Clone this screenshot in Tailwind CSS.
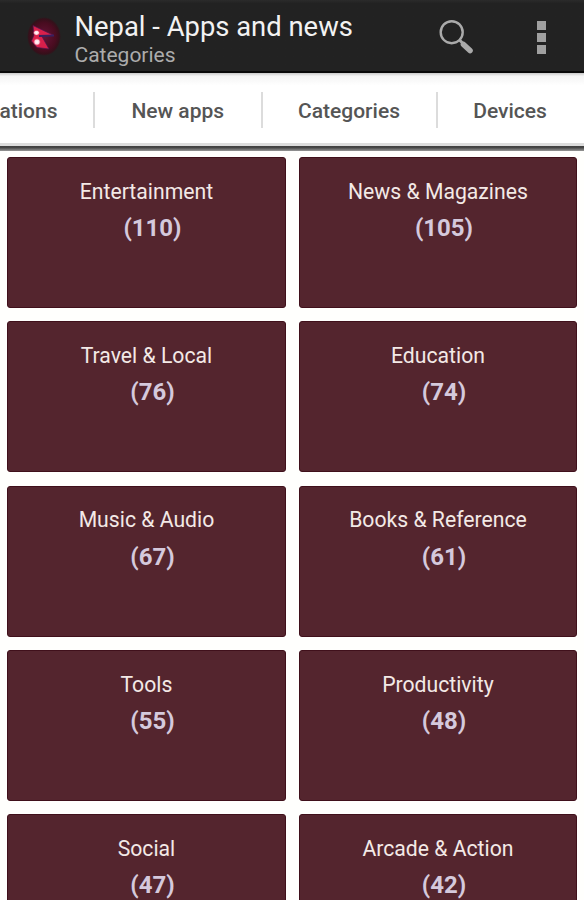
<!DOCTYPE html>
<html lang="en">
<head>
<meta charset="utf-8">
<title>Nepal - Apps and news</title>
<script src="https://cdn.jsdelivr.net/npm/@tailwindcss/browser@4"></script>
</head>
<body class="bg-white font-[Roboto,sans-serif]">
<div class="w-[584px] h-[900px] overflow-hidden flex flex-col bg-[#fffffd]">
  <header class="h-[73px] shrink-0 flex bg-linear-to-b from-[#2b2b2b] from-0% via-[#222222] via-5% to-[#222222] border-b-2 border-[#080808] pl-[26px]">
    <svg class="w-[36px] h-[40px] mt-[17px] shrink-0" viewBox="0 0 36 40">
      <defs>
        <radialGradient id="disc"><stop offset="0" stop-color="#641436"/><stop offset=".7" stop-color="#490c20"/><stop offset=".9" stop-color="#35101a"/><stop offset="1" stop-color="#222222"/></radialGradient>
        <radialGradient id="glow"><stop offset="0" stop-color="#fff"/><stop offset=".55" stop-color="#ffd5e0"/><stop offset="1" stop-color="#e62450" stop-opacity="0"/></radialGradient>
      </defs>
      <ellipse cx="18" cy="19.500" rx="17" ry="19.500" fill="url(#disc)"/>
      <path d="M7 8.500 27 18 16 19.500 23 32 11 30.500 5.500 24 8 18Z" fill="#d9204b" stroke="#4b1650" stroke-width=".7"/>
      <path d="M13 19 28 18.500" stroke="#39205d" stroke-width="1.800"/>
      <ellipse cx="10.500" cy="15.800" rx="3.600" ry="3" fill="url(#glow)"/>
      <circle cx="11" cy="25" r="4" fill="url(#glow)"/>
    </svg>
    <div class="ml-[12.5px] w-[364.5px] pt-[11px]">
      <h1 class="text-[27.4px] leading-[32px] text-[#f2f2f2] whitespace-nowrap">Nepal - Apps and news</h1>
      <p class="text-[21px] leading-[25px] text-[#acacac]">Categories</p>
    </div>
    <svg class="w-[38px] h-[38px] mt-[18px] shrink-0" viewBox="0 0 38 38">
      <circle cx="12.700" cy="14.200" r="11" fill="none" stroke="#aaaaaa" stroke-width="2.400"/>
      <path d="M20 21.500 25 26.500" stroke="#aaaaaa" stroke-width="3"/>
      <path d="M24.500 26.500 31 32.500" stroke="#aaaaaa" stroke-width="5.600" stroke-linecap="round"/>
    </svg>
    <div class="ml-[60px] mt-[21px] flex flex-col gap-[3px]">
      <span class="w-[9px] h-[9px] bg-[#a0a0a0]"></span>
      <span class="w-[9px] h-[9px] bg-[#a0a0a0]"></span>
      <span class="w-[9px] h-[9px] bg-[#a0a0a0]"></span>
    </div>
  </header>
  <nav class="relative h-[78px] shrink-0 flex items-start pt-[19px] bg-linear-to-b from-[#c8c8c8] from-0% via-[#f4f4f4] via-4% to-white to-16% text-[21px] leading-[38px] font-medium text-[#555555] whitespace-nowrap">
    <span class="w-[93px] flex justify-end pr-[35.5px]">Publications</span>
    <span class="w-[167.500px] h-[36px] border-l-2 border-[#dcdcdc] text-center">New apps</span>
    <span class="w-[175px] h-[36px] border-l-2 border-[#dcdcdc] text-center">Categories</span>
    <span class="w-[147px] h-[36px] border-l-2 border-[#dcdcdc] text-center">Devices</span>
    <span class="absolute left-0 bottom-0 w-full h-[8px] bg-linear-to-b from-[#dddddd] from-32% via-[#333333] via-45% to-[#999999] to-100%"></span>
  </nav>
  <main class="grid grid-cols-[278.5px_278.5px] auto-rows-[151px] gap-x-[13px] gap-y-[13.3px] pt-[6.2px] pl-[7.2px] text-center text-[21.2px] leading-[26px] text-[#f3e9e6]">
    <section class="bg-[#54252e] border border-[#40101b] rounded-[3px] pt-[20.5px]"><h2>Entertainment</h2><p class="pl-[12px] mt-[10.5px] text-[24px] font-bold text-[#d5c9dc]">(110)</p></section>
    <section class="bg-[#54252e] border border-[#40101b] rounded-[3px] pt-[20.5px]"><h2>News &amp; Magazines</h2><p class="pl-[12px] mt-[10.5px] text-[24px] font-bold text-[#d5c9dc]">(105)</p></section>
    <section class="bg-[#54252e] border border-[#40101b] rounded-[3px] pt-[20.5px]"><h2>Travel &amp; Local</h2><p class="pl-[12px] mt-[10.5px] text-[24px] font-bold text-[#d5c9dc]">(76)</p></section>
    <section class="bg-[#54252e] border border-[#40101b] rounded-[3px] pt-[20.5px]"><h2>Education</h2><p class="pl-[12px] mt-[10.5px] text-[24px] font-bold text-[#d5c9dc]">(74)</p></section>
    <section class="bg-[#54252e] border border-[#40101b] rounded-[3px] pt-[20.5px]"><h2>Music &amp; Audio</h2><p class="pl-[12px] mt-[10.5px] text-[24px] font-bold text-[#d5c9dc]">(67)</p></section>
    <section class="bg-[#54252e] border border-[#40101b] rounded-[3px] pt-[20.5px]"><h2>Books &amp; Reference</h2><p class="pl-[12px] mt-[10.5px] text-[24px] font-bold text-[#d5c9dc]">(61)</p></section>
    <section class="bg-[#54252e] border border-[#40101b] rounded-[3px] pt-[20.5px]"><h2>Tools</h2><p class="pl-[12px] mt-[10.5px] text-[24px] font-bold text-[#d5c9dc]">(55)</p></section>
    <section class="bg-[#54252e] border border-[#40101b] rounded-[3px] pt-[20.5px]"><h2>Productivity</h2><p class="pl-[12px] mt-[10.5px] text-[24px] font-bold text-[#d5c9dc]">(48)</p></section>
    <section class="bg-[#54252e] border border-[#40101b] rounded-[3px] pt-[20.5px]"><h2>Social</h2><p class="pl-[12px] mt-[10.5px] text-[24px] font-bold text-[#d5c9dc]">(47)</p></section>
    <section class="bg-[#54252e] border border-[#40101b] rounded-[3px] pt-[20.5px]"><h2>Arcade &amp; Action</h2><p class="pl-[12px] mt-[10.5px] text-[24px] font-bold text-[#d5c9dc]">(42)</p></section>
  </main>
</div>
</body>
</html>
